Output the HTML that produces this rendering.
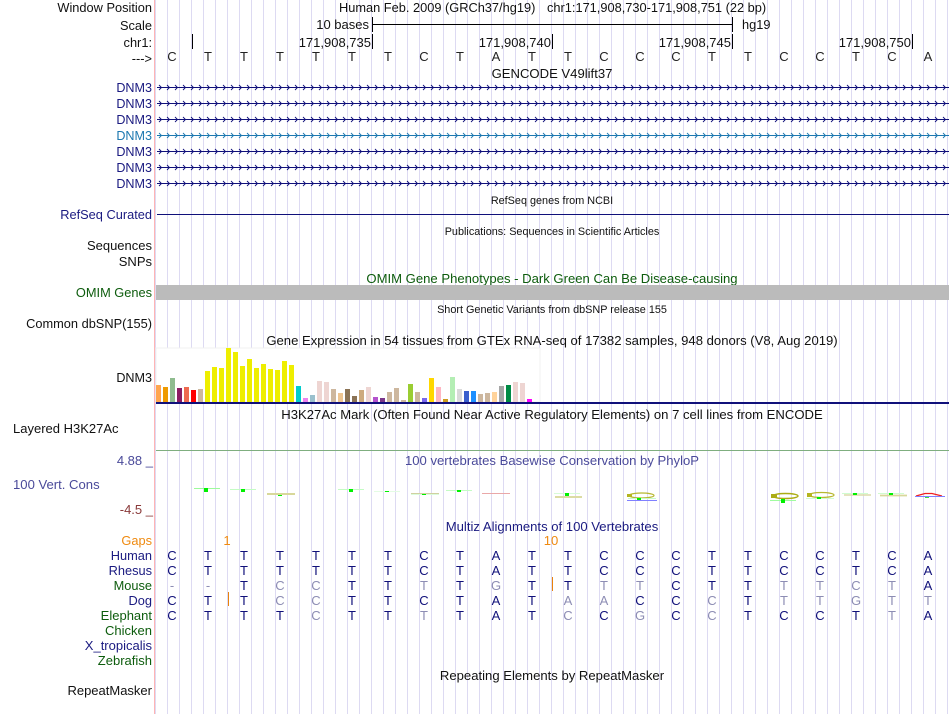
<!DOCTYPE html>
<html><head><meta charset="utf-8"><style>
html,body{margin:0;padding:0;background:#fff;width:950px;height:714px;overflow:hidden}
svg{display:block}
text{font-family:"Liberation Sans",sans-serif;font-size:12.8px;fill:#111}
.r{text-anchor:end}.m{text-anchor:middle;font-size:13.1px}
.n{fill:#1a1a80}.g{fill:#0d5c0d}.s{font-size:10.85px}
.d{font-size:12.6px}.u{font-size:13px}
.b{text-anchor:middle;fill:#10107a;font-size:13px}.l{text-anchor:middle;fill:#8d8db4;font-size:13px}
.k{text-anchor:middle;fill:#222;font-size:13px}
</style></head><body>
<svg width="950" height="714" viewBox="0 0 950 714" xmlns="http://www.w3.org/2000/svg">
<defs>
<pattern id="grid" x="167" y="0" width="12" height="714" patternUnits="userSpaceOnUse"><rect x="0" y="0" width="1" height="714" fill="#dddaf2"/></pattern>
<pattern id="chev" x="157" y="80" width="8" height="16" patternUnits="userSpaceOnUse"><path d="M2 5L4.5 7.5L2 10" fill="none" stroke="#10107a" stroke-width="0.9"/></pattern>
<pattern id="chevb" x="157" y="128" width="8" height="16" patternUnits="userSpaceOnUse"><path d="M2 5L4.5 7.5L2 10" fill="none" stroke="#1c78b0" stroke-width="0.9"/></pattern>
</defs>
<rect width="950" height="714" fill="#fff"/>
<rect x="155" y="0" width="795" height="714" fill="url(#grid)"/>
<rect x="154" y="0" width="1" height="714" fill="#ffb4b4"/>

<!-- header -->
<text class="r" x="152" y="12">Window Position</text>
<text class="r" x="152" y="30">Scale</text>
<text class="r" x="152" y="47">chr1:</text>
<text class="r" x="152" y="63">---&gt;</text>
<text x="339" y="12">Human Feb. 2009 (GRCh37/hg19)</text>
<text x="547" y="12">chr1:171,908,730-171,908,751 (22 bp)</text>
<text class="r u" x="369" y="29">10 bases</text>
<text x="742" y="29">hg19</text>
<rect x="372" y="24" width="361" height="1" fill="#000"/>
<rect x="372" y="17" width="1" height="15" fill="#000"/>
<rect x="732" y="17" width="1" height="15" fill="#000"/>
<rect x="192" y="34" width="1" height="15" fill="#000"/>
<rect x="372" y="34" width="1" height="15" fill="#000"/>
<rect x="552" y="34" width="1" height="15" fill="#000"/>
<rect x="732" y="34" width="1" height="15" fill="#000"/>
<rect x="912" y="34" width="1" height="15" fill="#000"/>
<text class="r u" x="371" y="47">171,908,735</text>
<text class="r u" x="551" y="47">171,908,740</text>
<text class="r u" x="731" y="47">171,908,745</text>
<text class="r u" x="911" y="47">171,908,750</text>
<g>
<text class="k" x="172" y="61">C</text><text class="k" x="208" y="61">T</text><text class="k" x="244" y="61">T</text><text class="k" x="280" y="61">T</text><text class="k" x="316" y="61">T</text><text class="k" x="352" y="61">T</text><text class="k" x="388" y="61">T</text><text class="k" x="424" y="61">C</text><text class="k" x="460" y="61">T</text><text class="k" x="496" y="61">A</text><text class="k" x="532" y="61">T</text><text class="k" x="568" y="61">T</text><text class="k" x="604" y="61">C</text><text class="k" x="640" y="61">C</text><text class="k" x="676" y="61">C</text><text class="k" x="712" y="61">T</text><text class="k" x="748" y="61">T</text><text class="k" x="784" y="61">C</text><text class="k" x="820" y="61">C</text><text class="k" x="856" y="61">T</text><text class="k" x="892" y="61">C</text><text class="k" x="928" y="61">A</text>
</g>
<text class="m" x="552" y="78">GENCODE V49lift37</text>

<!-- genes -->
<text class="r n d" x="152" y="92">DNM3</text>
<text class="r n d" x="152" y="108">DNM3</text>
<text class="r n d" x="152" y="124">DNM3</text>
<text class="r d" style="fill:#1c78b0" x="152" y="140">DNM3</text>
<text class="r n d" x="152" y="156">DNM3</text>
<text class="r n d" x="152" y="172">DNM3</text>
<text class="r n d" x="152" y="188">DNM3</text>
<g fill="#10107a">
<rect x="157" y="87" width="792" height="1"/><rect x="157" y="103" width="792" height="1"/><rect x="157" y="119" width="792" height="1"/><rect x="157" y="151" width="792" height="1"/><rect x="157" y="167" width="792" height="1"/><rect x="157" y="183" width="792" height="1"/>
</g>
<rect x="157" y="135" width="792" height="1" fill="#1c78b0"/>
<rect x="157" y="80" width="792" height="16" fill="url(#chev)"/>
<rect x="157" y="96" width="792" height="16" fill="url(#chev)"/>
<rect x="157" y="112" width="792" height="16" fill="url(#chev)"/>
<rect x="157" y="128" width="792" height="16" fill="url(#chevb)"/>
<rect x="157" y="144" width="792" height="16" fill="url(#chev)"/>
<rect x="157" y="160" width="792" height="16" fill="url(#chev)"/>
<rect x="157" y="176" width="792" height="16" fill="url(#chev)"/>

<text class="m s" x="552" y="204">RefSeq genes from NCBI</text>
<text class="r n" x="152" y="219">RefSeq Curated</text>
<rect x="157" y="214" width="792" height="1" fill="#10107a"/>
<text class="m s" x="552" y="235">Publications: Sequences in Scientific Articles</text>
<text class="r u" x="152" y="250">Sequences</text>
<text class="r u" x="152" y="266">SNPs</text>
<text class="m g" x="552" y="283">OMIM Gene Phenotypes - Dark Green Can Be Disease-causing</text>
<text class="r g" x="152" y="297">OMIM Genes</text>
<rect x="156" y="285" width="793" height="15" fill="#bbb"/>
<text class="m s" x="552" y="313">Short Genetic Variants from dbSNP release 155</text>
<text class="r" x="152" y="328">Common dbSNP(155)</text>
<text class="m" x="552" y="345">Gene Expression in 54 tissues from GTEx RNA-seq of 17382 samples, 948 donors (V8, Aug 2019)</text>

<!-- GTEx -->
<rect x="156" y="348" width="384" height="54" fill="#fff" stroke="#f0f0f0" stroke-width="1"/>
<text class="r d" x="152" y="382">DNM3</text>
<g>
<rect x="156" y="385" width="5" height="17" fill="#ffa54f"/>
<rect x="163" y="387" width="5" height="15" fill="#ee9a00"/>
<rect x="170" y="378" width="5" height="24" fill="#8fbc8f"/>
<rect x="177" y="388" width="5" height="14" fill="#8b1c62"/>
<rect x="184" y="387" width="5" height="15" fill="#ee6a50"/>
<rect x="191" y="390" width="5" height="12" fill="#ff0000"/>
<rect x="198" y="389" width="5" height="13" fill="#cdb79e"/>
<rect x="205" y="371" width="5" height="31" fill="#eeee00"/>
<rect x="212" y="367" width="5" height="35" fill="#eeee00"/>
<rect x="219" y="368" width="5" height="34" fill="#eeee00"/>
<rect x="226" y="348" width="5" height="54" fill="#eeee00"/>
<rect x="233" y="352" width="5" height="50" fill="#eeee00"/>
<rect x="240" y="366" width="5" height="36" fill="#eeee00"/>
<rect x="247" y="359" width="5" height="43" fill="#eeee00"/>
<rect x="254" y="368" width="5" height="34" fill="#eeee00"/>
<rect x="261" y="364" width="5" height="38" fill="#eeee00"/>
<rect x="268" y="369" width="5" height="33" fill="#eeee00"/>
<rect x="275" y="370" width="5" height="32" fill="#eeee00"/>
<rect x="282" y="361" width="5" height="41" fill="#eeee00"/>
<rect x="289" y="365" width="5" height="37" fill="#eeee00"/>
<rect x="296" y="386" width="5" height="16" fill="#00cdcd"/>
<rect x="303" y="398" width="5" height="4" fill="#ee82ee"/>
<rect x="310" y="395" width="5" height="7" fill="#9ac0cd"/>
<rect x="317" y="381" width="5" height="21" fill="#eed5d2"/>
<rect x="324" y="382" width="5" height="20" fill="#eed5d2"/>
<rect x="331" y="389" width="5" height="13" fill="#cdb79e"/>
<rect x="338" y="393" width="5" height="9" fill="#eec591"/>
<rect x="345" y="389" width="5" height="13" fill="#8b7355"/>
<rect x="352" y="396" width="5" height="6" fill="#8b7355"/>
<rect x="359" y="390" width="5" height="12" fill="#cdaa7d"/>
<rect x="366" y="387" width="5" height="15" fill="#eed5d2"/>
<rect x="373" y="397" width="5" height="5" fill="#b452cd"/>
<rect x="380" y="398" width="5" height="4" fill="#7a378b"/>
<rect x="387" y="392" width="5" height="10" fill="#cdb79e"/>
<rect x="394" y="388" width="5" height="14" fill="#cdb79e"/>
<rect x="401" y="400" width="5" height="2" fill="#cdb79e"/>
<rect x="408" y="384" width="5" height="18" fill="#9acd32"/>
<rect x="415" y="392" width="5" height="10" fill="#cdb79e"/>
<rect x="422" y="398" width="5" height="4" fill="#7a67ee"/>
<rect x="429" y="378" width="5" height="24" fill="#ffd700"/>
<rect x="436" y="387" width="5" height="15" fill="#ffb6c1"/>
<rect x="443" y="399" width="5" height="3" fill="#cd9b1d"/>
<rect x="450" y="377" width="5" height="25" fill="#b4eeb4"/>
<rect x="457" y="389" width="5" height="13" fill="#d9d9d9"/>
<rect x="464" y="391" width="5" height="11" fill="#3a5fcd"/>
<rect x="471" y="391" width="5" height="11" fill="#1e90ff"/>
<rect x="478" y="394" width="5" height="8" fill="#cdb79e"/>
<rect x="485" y="393" width="5" height="9" fill="#cdb79e"/>
<rect x="492" y="392" width="5" height="10" fill="#ffd39b"/>
<rect x="499" y="386" width="5" height="16" fill="#a6a6a6"/>
<rect x="506" y="385" width="5" height="17" fill="#008b45"/>
<rect x="513" y="382" width="5" height="20" fill="#eed5d2"/>
<rect x="520" y="383" width="5" height="19" fill="#eed5d2"/>
<rect x="527" y="399" width="5" height="3" fill="#ff00ff"/>
</g>
<rect x="156" y="402" width="793" height="2" fill="#10107a"/>

<text class="m" x="552" y="419">H3K27Ac Mark (Often Found Near Active Regulatory Elements) on 7 cell lines from ENCODE</text>
<text class="u" x="13" y="433">Layered H3K27Ac</text>
<rect x="156" y="450" width="793" height="1" fill="#7fae7f"/>

<!-- conservation -->
<text class="m" style="fill:#4a4a9a" x="552" y="465">100 vertebrates Basewise Conservation by PhyloP</text>
<text class="r u" style="fill:#4a4a9a" x="153" y="465">4.88 _</text>
<text class="m" x="13" y="489" style="fill:#4a4a9a;text-anchor:start">100 Vert. Cons</text>
<text class="r u" style="fill:#8a3a3a" x="153" y="514">-4.5 _</text>
<g>
<rect x="194" y="488" width="26" height="1" fill="#9cfa9c"/><rect x="204" y="488" width="4" height="4" fill="#00f000"/>
<rect x="230" y="489" width="26" height="1" fill="#c4fcc4"/><rect x="241" y="489" width="4" height="3" fill="#00f000"/>
<rect x="267" y="493" width="28" height="2" fill="#d8d89a"/><rect x="278" y="495" width="4" height="1" fill="#00f000"/>
<rect x="338" y="489" width="26" height="1" fill="#c4fcc4"/><rect x="349" y="489" width="4" height="3" fill="#00f000"/>
<rect x="374" y="491" width="26" height="1" fill="#e4fce4"/><rect x="385" y="491" width="4" height="1" fill="#00f000"/>
<rect x="411" y="493" width="28" height="1" fill="#d0d0a0"/><rect x="411" y="494" width="28" height="1" fill="#dcfcdc"/><rect x="422" y="494" width="4" height="1" fill="#00f000"/>
<rect x="446" y="490" width="26" height="1" fill="#c4fcc4"/><rect x="457" y="490" width="4" height="2" fill="#00f000"/>
<rect x="482" y="493" width="28" height="1" fill="#eaa8a8"/>
<rect x="554" y="493" width="26" height="1" fill="#d8fcd8"/><path d="M555 497H582" stroke="#dcdca4" stroke-width="2"/><rect x="565" y="493" width="4" height="3" fill="#00f000"/>
<ellipse cx="641.500" cy="495.500" rx="12.500" ry="2.500" fill="none" stroke="#b8b830" stroke-width="1.200"/><rect x="627" y="494" width="5" height="3" fill="#b4b420"/>
<rect x="628" y="498" width="28" height="1" fill="#c8fcc8"/><rect x="627" y="500" width="30" height="1" fill="#8080ff"/><rect x="637" y="498" width="4" height="2" fill="#00f000"/>
<ellipse cx="785.500" cy="496" rx="12.500" ry="2.500" fill="none" stroke="#acac14" stroke-width="1.400"/><rect x="771" y="494" width="6" height="4" fill="#acac14"/>
<rect x="770" y="500" width="26" height="1" fill="#a0fca0"/><rect x="781" y="499" width="4" height="4" fill="#00f000"/>
<ellipse cx="821.500" cy="495" rx="12.500" ry="2.500" fill="none" stroke="#b8b830" stroke-width="1.200"/><rect x="807" y="493" width="5" height="4" fill="#b4b420"/>
<rect x="806" y="498" width="28" height="1" fill="#d0fcd0"/><rect x="817" y="497" width="4" height="2" fill="#00f000"/>
<rect x="842" y="493" width="26" height="1" fill="#d0fcd0"/><path d="M844 495H871" stroke="#dcdcaa" stroke-width="1.500"/><rect x="853" y="493" width="4" height="2" fill="#00f000"/>
<rect x="878" y="493" width="26" height="1" fill="#d0fcd0"/><path d="M880 495.500H907" stroke="#d8d89a" stroke-width="1.800"/><rect x="889" y="493" width="4" height="2" fill="#00f000"/>
<path d="M916 496L925 493.500H932L942 496" fill="none" stroke="#f02020" stroke-width="1.200"/><rect x="915" y="496" width="30" height="1" fill="#8080ff"/><rect x="925" y="497" width="4" height="1" fill="#40e040"/>
</g>

<!-- multiz -->
<text class="m n" x="552" y="531">Multiz Alignments of 100 Vertebrates</text>
<text class="r" style="fill:#ef8a10" x="152" y="545">Gaps</text>
<text class="m" style="fill:#ef8a10" x="227" y="545">1</text>
<text class="m" style="fill:#ef8a10" x="551" y="545">10</text>
<text class="r n" x="152" y="560">Human</text>
<text class="r n" x="152" y="575">Rhesus</text>
<text class="r g" x="152" y="590">Mouse</text>
<text class="r n" x="152" y="605">Dog</text>
<text class="r g u" x="152" y="620">Elephant</text>
<text class="r g u" x="152" y="635">Chicken</text>
<text class="r n u" x="152" y="650">X_tropicalis</text>
<text class="r g u" x="152" y="665">Zebrafish</text>
<text class="r u" x="152" y="695">RepeatMasker</text>
<text class="m" x="552" y="680">Repeating Elements by RepeatMasker</text>
<rect x="228" y="592" width="1" height="14" fill="#e8820c"/>
<rect x="552" y="577" width="1" height="14" fill="#e8820c"/>

<g><text class="b" x="172" y="560">C</text><text class="b" x="208" y="560">T</text><text class="b" x="244" y="560">T</text><text class="b" x="280" y="560">T</text><text class="b" x="316" y="560">T</text><text class="b" x="352" y="560">T</text><text class="b" x="388" y="560">T</text><text class="b" x="424" y="560">C</text><text class="b" x="460" y="560">T</text><text class="b" x="496" y="560">A</text><text class="b" x="532" y="560">T</text><text class="b" x="568" y="560">T</text><text class="b" x="604" y="560">C</text><text class="b" x="640" y="560">C</text><text class="b" x="676" y="560">C</text><text class="b" x="712" y="560">T</text><text class="b" x="748" y="560">T</text><text class="b" x="784" y="560">C</text><text class="b" x="820" y="560">C</text><text class="b" x="856" y="560">T</text><text class="b" x="892" y="560">C</text><text class="b" x="928" y="560">A</text></g>
<g><text class="b" x="172" y="575">C</text><text class="b" x="208" y="575">T</text><text class="b" x="244" y="575">T</text><text class="b" x="280" y="575">T</text><text class="b" x="316" y="575">T</text><text class="b" x="352" y="575">T</text><text class="b" x="388" y="575">T</text><text class="b" x="424" y="575">C</text><text class="b" x="460" y="575">T</text><text class="b" x="496" y="575">A</text><text class="b" x="532" y="575">T</text><text class="b" x="568" y="575">T</text><text class="b" x="604" y="575">C</text><text class="b" x="640" y="575">C</text><text class="b" x="676" y="575">C</text><text class="b" x="712" y="575">T</text><text class="b" x="748" y="575">T</text><text class="b" x="784" y="575">C</text><text class="b" x="820" y="575">C</text><text class="b" x="856" y="575">T</text><text class="b" x="892" y="575">C</text><text class="b" x="928" y="575">A</text></g>
<g><text class="l" x="172" y="590">-</text><text class="l" x="208" y="590">-</text><text class="b" x="244" y="590">T</text><text class="l" x="280" y="590">C</text><text class="l" x="316" y="590">C</text><text class="b" x="352" y="590">T</text><text class="b" x="388" y="590">T</text><text class="l" x="424" y="590">T</text><text class="b" x="460" y="590">T</text><text class="l" x="496" y="590">G</text><text class="b" x="532" y="590">T</text><text class="b" x="568" y="590">T</text><text class="l" x="604" y="590">T</text><text class="l" x="640" y="590">T</text><text class="b" x="676" y="590">C</text><text class="b" x="712" y="590">T</text><text class="b" x="748" y="590">T</text><text class="l" x="784" y="590">T</text><text class="l" x="820" y="590">T</text><text class="l" x="856" y="590">C</text><text class="l" x="892" y="590">T</text><text class="b" x="928" y="590">A</text></g>
<g><text class="b" x="172" y="605">C</text><text class="b" x="208" y="605">T</text><text class="b" x="244" y="605">T</text><text class="l" x="280" y="605">C</text><text class="l" x="316" y="605">C</text><text class="b" x="352" y="605">T</text><text class="b" x="388" y="605">T</text><text class="b" x="424" y="605">C</text><text class="b" x="460" y="605">T</text><text class="b" x="496" y="605">A</text><text class="b" x="532" y="605">T</text><text class="l" x="568" y="605">A</text><text class="l" x="604" y="605">A</text><text class="b" x="640" y="605">C</text><text class="b" x="676" y="605">C</text><text class="l" x="712" y="605">C</text><text class="b" x="748" y="605">T</text><text class="l" x="784" y="605">T</text><text class="l" x="820" y="605">T</text><text class="l" x="856" y="605">G</text><text class="l" x="892" y="605">T</text><text class="l" x="928" y="605">T</text></g>
<g><text class="b" x="172" y="620">C</text><text class="b" x="208" y="620">T</text><text class="b" x="244" y="620">T</text><text class="b" x="280" y="620">T</text><text class="l" x="316" y="620">C</text><text class="b" x="352" y="620">T</text><text class="b" x="388" y="620">T</text><text class="l" x="424" y="620">T</text><text class="b" x="460" y="620">T</text><text class="b" x="496" y="620">A</text><text class="b" x="532" y="620">T</text><text class="l" x="568" y="620">C</text><text class="b" x="604" y="620">C</text><text class="l" x="640" y="620">G</text><text class="b" x="676" y="620">C</text><text class="l" x="712" y="620">C</text><text class="b" x="748" y="620">T</text><text class="b" x="784" y="620">C</text><text class="b" x="820" y="620">C</text><text class="b" x="856" y="620">T</text><text class="l" x="892" y="620">T</text><text class="b" x="928" y="620">A</text></g>
</svg>
</body></html>
